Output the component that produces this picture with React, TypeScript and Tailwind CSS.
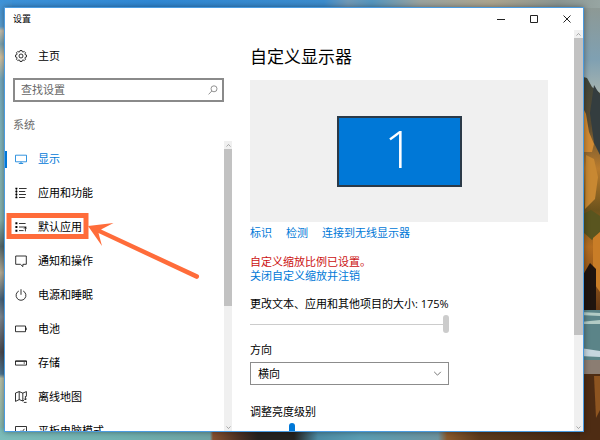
import type { ReactNode } from "react";

function Icon({ children }: { children: ReactNode }) {
  return (
    <svg
      className="size-3 shrink-0"
      viewBox="0 0 12 12"
      fill="none"
      stroke="currentColor"
      strokeWidth="0.8"
      aria-hidden="true"
    >
      {children}
    </svg>
  );
}

const gear = (() => {
  const points: string[] = [];
  for (let i = 0; i < 8; i++) {
    const steps: [number, number][] = [
      [-0.3, 4.4],
      [-0.17, 5.6],
      [0.17, 5.6],
      [0.3, 4.4],
    ];
    for (const [offset, radius] of steps) {
      const angle = (i * Math.PI) / 4 + offset;
      points.push(`${(6 + radius * Math.cos(angle)).toFixed(2)},${(6 + radius * Math.sin(angle)).toFixed(2)}`);
    }
  }
  return points.join(" ");
})();

const items: { label: string; icon: ReactNode }[] = [
  {
    label: "显示",
    icon: (
      <Icon>
        <path d="M.5 2.2h11v6.6H.5zM6 8.8v1.6M3.8 10.5h4.4" />
      </Icon>
    ),
  },
  {
    label: "应用和功能",
    icon: (
      <Icon>
        <path d="M4 1.5h7.6M4 4.5h6.2M4 7.5h7M4 10.5h6.2" />
        <path d="M.4 1.5h2M.4 4.5h2M.4 7.5h2M.4 10.5h2" strokeWidth="1.7" />
        <path d="M1.4 1v10" strokeWidth="0.7" />
      </Icon>
    ),
  },
  {
    label: "默认应用",
    icon: (
      <Icon>
        <path d="M4 2.5h6.6M4 6h7.4M4 9.6h4.6M10.4 10.4V6.2M9 7.6l1.4-1.5 1.4 1.5" />
        <path d="M.4 2.3h2M.4 6h2M.4 9.7h2" strokeWidth="1.9" />
      </Icon>
    ),
  },
  {
    label: "通知和操作",
    icon: (
      <Icon>
        <path d="M.7 1h10.6v8.3H7.9V11.6L5.4 9.3H.7z" />
      </Icon>
    ),
  },
  {
    label: "电源和睡眠",
    icon: (
      <Icon>
        <path d="M3.8 2A4.9 4.9 0 1 0 8.2 2M6 .2v5.6" />
      </Icon>
    ),
  },
  {
    label: "电池",
    icon: (
      <Icon>
        <path d="M.5 3h10v5.7H.5zM11.2 4.6v2.5" />
      </Icon>
    ),
  },
  {
    label: "存储",
    icon: (
      <Icon>
        <path d="M.5 3.9h11v4.2H.5zM.5 4.3h11M8.6 6h1.4" />
      </Icon>
    ),
  },
  {
    label: "离线地图",
    icon: (
      <Icon>
        <path d="M9 9.4 7.8 10 4.2 8.6.5 10.4V2L4.2.6l3.6 1.5L11.4.6v5M4.2.6v8M7.8 2.1V10" />
        <path d="M10.4 5v3.6M9.2 7.6l1.2 1.4 1.2-1.4M8.8 11.4h2.8" />
      </Icon>
    ),
  },
  {
    label: "平板电脑模式",
    icon: (
      <Icon>
        <path d="M.5 1.5h11v9H.5zM6.5 7.5 9.5 3.8M6 5.5v2.5h2.5" />
      </Icon>
    ),
  },
];

function Chevron({ up = false, className }: { up?: boolean; className: string }) {
  return (
    <svg className={className} viewBox="0 0 10 6" fill="none" stroke="currentColor" aria-hidden="true">
      <path d={up ? "M1 5l4-4 4 4" : "M1 1l4 4 4-4"} strokeWidth="1.2" />
    </svg>
  );
}

function ScrollBar({ width, thumb }: { width: string; thumb: string }) {
  return (
    <div className={`flex shrink-0 flex-col bg-[#f0f0f0] text-[#777777] ${width}`} aria-hidden="true">
      <div className="flex h-2 items-center justify-center">
        <Chevron up className="h-[3px] w-[5px]" />
      </div>
      <div className={`bg-[#c2c2c2] ${thumb}`} />
      <div className="mt-auto flex h-2 items-center justify-center">
        <Chevron className="h-[3px] w-[5px]" />
      </div>
    </div>
  );
}

function Wallpaper() {
  return (
    <svg
      className="absolute inset-0 size-full"
      viewBox="0 0 600 440"
      preserveAspectRatio="none"
      aria-hidden="true"
    >
      <defs>
        <linearGradient id="sky" x1="0" x2="1" y1="0" y2="0">
          <stop offset="0" stopColor="#3d92d8" />
          <stop offset=".25" stopColor="#3088d4" />
          <stop offset=".54" stopColor="#3c8ccd" />
          <stop offset=".58" stopColor="#7199b6" />
          <stop offset=".62" stopColor="#5596bf" />
          <stop offset=".7" stopColor="#9aa39f" />
          <stop offset=".82" stopColor="#aca58f" />
          <stop offset=".93" stopColor="#8b9693" />
          <stop offset="1" stopColor="#97a5a2" />
        </linearGradient>
        <linearGradient id="coast" x1="0" x2="0" y1="0" y2="1">
          <stop offset="0" stopColor="#3d92d8" />
          <stop offset=".06" stopColor="#5a9dce" />
          <stop offset=".07" stopColor="#c5bfae" />
          <stop offset=".1" stopColor="#7ba3b0" />
          <stop offset=".13" stopColor="#d3c2a0" />
          <stop offset=".18" stopColor="#75a9be" />
          <stop offset=".3" stopColor="#80b5bd" />
          <stop offset=".5" stopColor="#87b2ac" />
          <stop offset=".56" stopColor="#54676a" />
          <stop offset=".62" stopColor="#b5ad98" />
          <stop offset=".68" stopColor="#46637b" />
          <stop offset=".72" stopColor="#7c8791" />
          <stop offset=".8" stopColor="#4a4a50" />
          <stop offset=".85" stopColor="#4c7592" />
          <stop offset=".86" stopColor="#b8c0a8" />
          <stop offset="1" stopColor="#7ab6b0" />
        </linearGradient>
        <linearGradient id="haze" x1="0" x2="0" y1="0" y2="1">
          <stop offset="0" stopColor="#8d9995" />
          <stop offset=".5" stopColor="#7fa0b2" />
          <stop offset="1" stopColor="#b9bdae" />
        </linearGradient>
        <linearGradient id="cliff" x1="0" x2="0" y1="0" y2="1">
          <stop offset="0" stopColor="#3d453c" />
          <stop offset=".2" stopColor="#5b4c31" />
          <stop offset=".38" stopColor="#b97b2d" />
          <stop offset=".55" stopColor="#6d531c" />
          <stop offset=".7" stopColor="#b56d20" />
          <stop offset="1" stopColor="#5b3113" />
        </linearGradient>
        <linearGradient id="shore" x1="0" x2="1" y1="0" y2="0">
          <stop offset="0" stopColor="#7cbdba" />
          <stop offset=".2" stopColor="#70b1b0" />
          <stop offset=".35" stopColor="#6fa3a4" />
          <stop offset=".355" stopColor="#86502f" />
          <stop offset=".4" stopColor="#4a3024" />
          <stop offset=".43" stopColor="#25221f" />
          <stop offset=".49" stopColor="#25221f" />
          <stop offset=".53" stopColor="#4d8ca4" />
          <stop offset=".6" stopColor="#5b9eb4" />
          <stop offset=".73" stopColor="#6d94a0" />
          <stop offset=".745" stopColor="#8a5a2c" />
          <stop offset=".8" stopColor="#5c3a1c" />
          <stop offset="1" stopColor="#3e2412" />
        </linearGradient>
      </defs>
      <path d="M0 0h600v30H0z" fill="url(#sky)" />
      <path d="M0 0h12v440H0z" fill="url(#coast)" />
      <path d="M580 8h20v102h-20z" fill="url(#haze)" />
      <path d="M580 76l7 2 5 9 8 6v227h-20z" fill="url(#cliff)" />
      <path d="M582 106l4 8 3 18 5 12-2 8h-10z" fill="#d08a34" />
      <path d="M594 85l6 10v60l-6-12-4-30z" fill="#343d3f" />
      <path d="M586 155l8 4 4 18-3 22-10 10z" fill="#c88832" />
      <path d="M583 214l8-4 9 6v16l-8 8-9-8z" fill="#59551f" />
      <path d="M593 238l7-6v60l-7-10z" fill="#c97d27" />
      <path d="M583 275l7-12 6 6v42h-13z" fill="#20140e" />
      <path d="M580 310h20v64h-20z" fill="#5b8488" />
      <path d="M580 312l20 1v3l-20-1zM580 322l20-2v4h-20z" fill="#b2cbc5" />
      <path d="M580 348l20 3v6l-20-1z" fill="#c6d6df" />
      <path d="M580 360h20v14h-20z" fill="#8b7d72" />
      <path d="M0 428h600v12H0z" fill="url(#shore)" />
      <path d="M580 374h20v66h-20z" fill="#4e2c13" />
      <path d="M594 376h6v34l-4 8z" fill="#8d5420" />
    </svg>
  );
}

const sliderBase =
  "block h-[18px] w-full appearance-none bg-transparent bg-[linear-gradient(#cccccc,#cccccc)] bg-[length:100%_1px] bg-center bg-no-repeat outline-none [&::-webkit-slider-thumb]:h-[18px] [&::-webkit-slider-thumb]:w-1.5 [&::-webkit-slider-thumb]:appearance-none [&::-webkit-slider-thumb]:rounded-full";

export default function App() {
  return (
    <div className="relative h-screen w-full overflow-hidden bg-[#3d92d8] pt-[7px] pr-4 pb-2 pl-1 font-['Open_Sans','Noto_Sans_CJK_SC',sans-serif] text-[11px] leading-[14px] text-black">
      <Wallpaper />
      <div className="relative flex h-full flex-col border border-[#4a9be0] bg-white shadow-[0_0_6px_rgba(0,0,0,0.4)]">
        <header className="flex h-[22px] shrink-0 items-center justify-between pl-2">
          <h1 className="text-[9px]">设置</h1>
          <div className="flex text-[#222222]">
            <button className="flex h-[22px] w-[33px] items-center justify-center" aria-label="最小化">
              <svg className="size-2" viewBox="0 0 8 8" stroke="currentColor">
                <path d="M0 4.5h8" />
              </svg>
            </button>
            <button className="flex h-[22px] w-[33px] items-center justify-center" aria-label="最大化">
              <svg className="size-2" viewBox="0 0 8 8" fill="none" stroke="currentColor">
                <path d="M.5.5h7v7h-7z" />
              </svg>
            </button>
            <button className="flex h-[22px] w-[33px] items-center justify-center" aria-label="关闭">
              <svg className="size-2" viewBox="0 0 8 8" stroke="currentColor">
                <path d="M.5.5l7 7M7.5.5l-7 7" />
              </svg>
            </button>
          </div>
        </header>

        <div className="flex min-h-0 flex-1">
          <aside className="flex w-[227px] shrink-0 flex-col">
            <button className="mt-4 flex h-5 items-center gap-[11px] pl-2.5 text-left">
              <Icon>
                <polygon points={gear} />
                <circle cx="6" cy="6" r="2" />
              </Icon>
              主页
            </button>
            <div className="mt-3 mr-2 ml-2 flex h-6 shrink-0 items-center border-2 border-[#8a8a8a] pr-1">
              <input
                className="min-w-0 flex-1 pl-1.5 outline-none placeholder:text-[#666666]"
                placeholder="查找设置"
                aria-label="查找设置"
              />
              <svg
                className="size-2.5 text-[#777777]"
                viewBox="0 0 10 10"
                fill="none"
                stroke="currentColor"
                strokeWidth="0.8"
                aria-hidden="true"
              >
                <circle cx="6" cy="3.8" r="3" />
                <path d="M3.8 6 .6 9.4" />
              </svg>
            </div>
            <h2 className="mt-4 ml-2 text-[#6b6b6b]">系统</h2>
            <div className="mt-[9px] flex min-h-0 flex-1">
              <nav className="min-w-0 flex-1 overflow-hidden pt-px">
                {items.map((item, index) => (
                  <a
                    key={item.label}
                    href="#"
                    className={`relative flex h-[34px] items-center gap-[11px] pl-2.5 ${
                      index === 0
                        ? "text-[#0078d7] before:absolute before:left-0 before:h-[17px] before:w-0.5 before:bg-[#0078d7]"
                        : ""
                    }`}
                  >
                    {item.icon}
                    {item.label}
                  </a>
                ))}
              </nav>
              <ScrollBar width="w-2" thumb="h-[54%]" />
            </div>
          </aside>

          <main className="min-w-0 flex-1 overflow-hidden pr-[26px] pl-[18px]">
            <h2 className="mt-4 text-[17px] leading-[22px]">自定义显示器</h2>
            <div className="mt-3 flex h-[142px] items-center justify-center bg-[#f0f0f0]">
              <button className="h-[71px] w-[125px] border-2 border-[#2b3a48] bg-[#0078d7] pb-1.5 font-['Open_Sans'] text-[52px] leading-[60px] font-light text-white">
                1
              </button>
            </div>
            <div className="mt-1 flex gap-3.5 text-[#0078d7]">
              <a href="#">标识</a>
              <a href="#">检测</a>
              <a href="#">连接到无线显示器</a>
            </div>
            <p className="mt-[15px] text-[#cc1111]">自定义缩放比例已设置。</p>
            <a href="#" className="block text-[#0078d7]">
              关闭自定义缩放并注销
            </a>
            <div className="mt-3.5 w-[199px]">
              <label htmlFor="scale" className="block whitespace-nowrap">
                更改文本、应用和其他项目的大小: 175%
              </label>
              <input
                id="scale"
                type="range"
                min="0"
                max="100"
                defaultValue="100"
                className={`mt-1 [&::-webkit-slider-thumb]:bg-[#cccccc] ${sliderBase}`}
              />
              <label htmlFor="direction" className="mt-[10px] block">
                方向
              </label>
              <div className="relative mt-[5px]">
                <select
                  id="direction"
                  className="block h-[23px] w-full appearance-none border border-[#8c8c8c] bg-white pl-[7px] outline-none"
                >
                  <option>横向</option>
                </select>
                <Chevron className="pointer-events-none absolute top-[9px] right-[7px] h-[5px] w-[9px] text-[#777777]" />
              </div>
              <label htmlFor="brightness" className="mt-5 block">
                调整亮度级别
              </label>
              <input
                id="brightness"
                type="range"
                min="0"
                max="100"
                defaultValue="20"
                className={`mt-1 [&::-webkit-slider-thumb]:bg-[#0078d7] ${sliderBase}`}
              />
            </div>
          </main>
          <ScrollBar width="w-[9px]" thumb="h-[74%]" />
        </div>
      </div>

      <svg
        className="pointer-events-none absolute top-[205px] left-0 h-[80px] w-[210px]"
        viewBox="0 205 210 80"
        aria-hidden="true"
      >
        <path d="M9 215.500h77v21H9z" fill="none" stroke="#ff6c3a" strokeWidth="5" />
        <path
          d="M88 226l25.500-3-12.500 6.500 97 45a2.400 2.400 0 0 1-2 4.300l-97.500-45.800 3.500 13z"
          fill="#ff6c3a"
        />
      </svg>
    </div>
  );
}
